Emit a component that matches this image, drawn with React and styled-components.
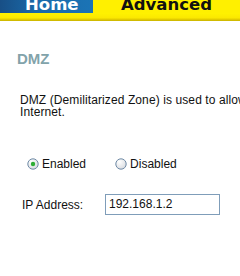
import React from "react";
import styled, { createGlobalStyle } from "styled-components";

const GlobalStyle = createGlobalStyle`
  html, body {
    margin: 0;
    padding: 0;
    background: #ffffff;
    overflow: hidden;
  }
  body {
    font-family: "Liberation Sans", Arial, sans-serif;
  }
`;

const Radio = ({ checked }) => (
  <RadioMark width="12" height="12" viewBox="0 0 12 12">
    <defs>
      <radialGradient id={checked ? "rg-on" : "rg-off"} cx="0.35" cy="0.3" r="0.8">
        <stop offset="0" stopColor="#ffffff" />
        <stop offset="1" stopColor="#d6d9de" />
      </radialGradient>
    </defs>
    <circle cx="6" cy="6" r="5.2" fill={`url(#${checked ? "rg-on" : "rg-off"})`} stroke="#6f8aa6" strokeWidth="1" />
    {checked && <circle cx="6" cy="6" r="2.2" fill="#2fae36" />}
  </RadioMark>
);

const App = () => {
  return (
    <Page>
      <GlobalStyle />
      <TabBar>
        <HomeTab>Home</HomeTab>
        <AdvancedTab>Advanced</AdvancedTab>
      </TabBar>
      <TabStripe />

      <Content>
        <Heading>DMZ</Heading>
        <Intro>
          DMZ (Demilitarized Zone) is used to allow a single computer on the LAN to be exposed to the
          <br />
          Internet.
        </Intro>

        <RadioRow>
          <RadioOption>
            <Radio checked />
            Enabled
          </RadioOption>
          <RadioOption>
            <Radio />
            Disabled
          </RadioOption>
        </RadioRow>

        <FieldRow>
          <FieldLabel>IP Address:</FieldLabel>
          <TextBox>192.168.1.2</TextBox>
        </FieldRow>
      </Content>
    </Page>
  );
};

export default App;

const Page = styled.div`
  width: 700px;
  height: 276px;
  background: #ffffff;
`;

const TabBar = styled.div`
  display: flex;
  height: 13px;
  overflow: hidden;
  font-family: "DejaVu Sans", Verdana, sans-serif;
  font-weight: bold;
  font-size: 16.5px;
  line-height: 13px;
`;

const HomeTab = styled.div`
  width: 93px;
  background: linear-gradient(90deg, #184f86 0%, #1a6aa9 40%, #1b74b6 100%);
  color: #ffffff;
  padding-left: 25px;
  box-sizing: border-box;
  display: flex;
  align-items: flex-end;
  padding-bottom: 2px;
`;

const AdvancedTab = styled.div`
  flex: 1;
  background: #fff000;
  color: #111111;
  padding-left: 28px;
  display: flex;
  align-items: flex-end;
  padding-bottom: 2px;
`;

const TabStripe = styled.div`
  height: 8px;
  background: linear-gradient(180deg, #fff200 0%, #fbe800 60%, #e3cc00 80%, #c8b200 100%);
`;

const Content = styled.div`
  padding-left: 17px;
`;

const Heading = styled.h1`
  margin: 30px 0 0 0;
  font-size: 15px;
  line-height: 15px;
  font-weight: bold;
  color: #82a3aa;
`;

const Intro = styled.p`
  margin: 28px 0 0 3px;
  font-size: 12px;
  line-height: 12px;
  letter-spacing: 0.1px;
  color: #111111;
  white-space: nowrap;
`;

const RadioRow = styled.div`
  display: flex;
  gap: 29px;
  margin: 40px 0 0 10px;
  font-size: 12px;
  line-height: 12px;
  color: #111111;
`;

const RadioOption = styled.label`
  display: flex;
  align-items: center;
  gap: 3px;
`;

const RadioMark = styled.svg`
  display: block;
  flex: none;
`;

const FieldRow = styled.div`
  display: flex;
  align-items: center;
  margin: 24px 0 0 5px;
  font-size: 12px;
  color: #111111;
`;

const FieldLabel = styled.span`
  width: 83px;
`;

const TextBox = styled.div`
  box-sizing: border-box;
  width: 115px;
  height: 21px;
  border: 1px solid #7f9db9;
  padding: 3px 0 0 3px;
  font-size: 12px;
  line-height: 13px;
  color: #111111;
`;
